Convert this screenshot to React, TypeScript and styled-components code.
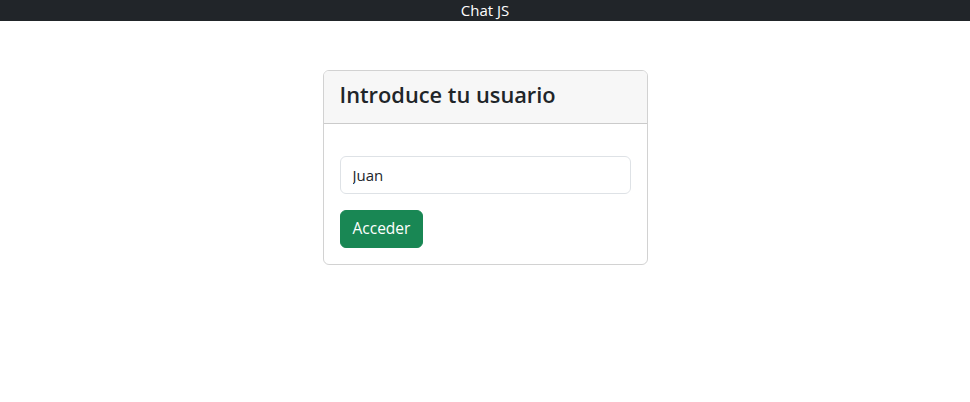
import React from "react";
import styled, { createGlobalStyle } from "styled-components";

const Global = createGlobalStyle`
  * { box-sizing: border-box; }
  body {
    margin: 0;
    font-family: "Open Sans", "Noto Sans", sans-serif;
    font-size: 16px;
    line-height: 1.5;
    color: #212529;
    background: #fff;
  }
`;

const NavBar = styled.header`
  height: 21px;
  background: #212529;
  color: #fff;
  display: flex;
  align-items: center;
  justify-content: center;
  font-size: 15px;
  line-height: 21px;
`;

const Main = styled.main`
  display: flex;
  justify-content: center;
  padding-top: 49px;
`;

const Card = styled.section`
  width: 325px;
  border: 1px solid rgba(0, 0, 0, 0.175);
  border-radius: 6px;
  overflow: hidden;
`;

const CardHeader = styled.div`
  background: #f7f7f7;
  border-bottom: 1px solid rgba(0, 0, 0, 0.175);
  padding: 6px 16px 10px;
  height: 53px;
  display: flex;
  align-items: center;
`;

const Title = styled.h3`
  margin: 0;
  font-size: 21.8px;
  font-weight: 600;
  line-height: 1.2;
`;

const CardBody = styled.form`
  padding: 32px 16px 16px;
  display: flex;
  flex-direction: column;
  gap: 16px;
  align-items: flex-start;
`;

const Input = styled.input`
  width: 100%;
  height: 38px;
  border: 1px solid #dee2e6;
  border-radius: 6px;
  padding: 6px 12px;
  font: inherit;
  font-size: 15px;
  color: #212529;
  outline: none;
`;

const Button = styled.button`
  height: 38px;
  background: #198754;
  color: #fff;
  border: 1px solid #198754;
  border-radius: 6px;
  padding: 6px 12px;
  font: inherit;
  font-size: 15.5px;
  cursor: pointer;
`;

export default function App() {
  return (
    <>
      <Global />
      <NavBar>Chat JS</NavBar>
      <Main>
        <Card>
          <CardHeader>
            <Title>Introduce tu usuario</Title>
          </CardHeader>
          <CardBody onSubmit={(e) => e.preventDefault()}>
            <Input defaultValue="Juan" />
            <Button type="submit">Acceder</Button>
          </CardBody>
        </Card>
      </Main>
    </>
  );
}
